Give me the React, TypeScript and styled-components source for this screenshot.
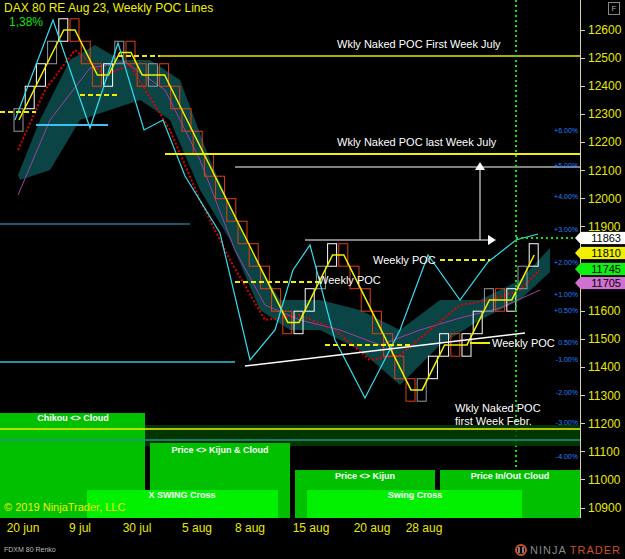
import React from 'react';
import styled, { createGlobalStyle } from 'styled-components';

const Global = createGlobalStyle`
  html, body { margin: 0; background: #000; }
  body { font-family: "Liberation Sans", Arial, sans-serif; }
`;

const Root = styled.div`
  width: 625px;
  height: 559px;
  display: grid;
  grid-template-rows: 518px 22px 19px;
  background: #000;
  overflow: hidden;
`;

const Top = styled.div`
  display: flex;
`;

const Plot = styled.div`
  position: relative;
  width: 580px;
  height: 518px;
`;

const Title = styled.div`
  position: absolute;
  left: 4px;
  top: 1px;
  color: #f0f000;
  font-size: 12px;
  line-height: 14px;
`;

const Pct = styled.div`
  color: #10e010;
  font-size: 12px;
  padding-left: 5px;
`;

const Axis = styled.div`
  position: relative;
  width: 44px;
  border-left: 1px solid #d8d0b0;
`;

const AxisLabel = styled.div`
  position: absolute;
  left: 0;
  display: flex;
  align-items: center;
  gap: 3px;
  transform: translateY(-50%);
  color: #e8e800;
  font-size: 12px;
  &::before {
    content: '';
    width: 4px;
    height: 1px;
    background: #d8d0b0;
  }
`;

const Tag = styled.div<{ $bg: string }>`
  position: absolute;
  left: -6px;
  width: 50px;
  height: 13px;
  transform: translateY(-50%);
  background: ${(p) => p.$bg};
  clip-path: polygon(0 50%, 6px 0, 100% 0, 100% 100%, 6px 100%);
  color: #000;
  font-size: 11px;
  line-height: 13px;
  text-align: right;
  padding-right: 4px;
  box-sizing: border-box;
`;

const Corner = styled.div`
  position: absolute;
  right: 5px;
  top: 2px;
  width: 10px;
  height: 11px;
  border: 1px solid #888;
  color: #aaa;
  font-size: 8px;
  text-align: center;
  line-height: 11px;
`;

const TimeAxis = styled.div`
  position: relative;
  color: #e8e800;
  font-size: 12px;
`;

const TimeLabel = styled.span`
  position: absolute;
  top: 3px;
  transform: translateX(-50%);
  white-space: nowrap;
`;

const Footer = styled.div`
  display: flex;
  justify-content: space-between;
  align-items: center;
  padding: 0 4px;
`;

const Instr = styled.span`
  color: #bbb;
  font-size: 7px;
`;

const Logo = styled.span`
  display: flex;
  align-items: center;
  gap: 3px;
  color: #888;
  font-size: 11px;
  letter-spacing: 1px;
  b { color: #d05020; font-weight: normal; }
`;

const Y = (p: number) => 30 + (12600 - p) * 0.2812;

const steps = [5, -3, 2, -2, 1, -12, 4, -7, 3, -1, 3, -1, 3];
type Brick = { x: number; lo: number; up: boolean };
const bricks: Brick[] = [];
let lvl = 12240;
let col = 0;
steps.forEach((s) => {
  for (let i = 0; i < Math.abs(s); i++) {
    const up = s > 0;
    const next = lvl + (up ? 80 : -80);
    bricks.push({ x: 14 + col * 11.2, lo: Math.min(lvl, next), up });
    lvl = next;
    col++;
  }
});
const mid = bricks.map((b) => `${b.x + 5},${Y(b.lo + 40)}`).join(' ');

const swing = '15,120 53,20 90,128 118,43 144,130 163,120 185,176 220,233 250,360 275,330 293,270 310,245 335,340 365,398 400,330 428,255 460,300 488,262 516,240 538,234';
const redMa = '18,150 45,90 75,50 105,75 130,65 170,130 200,200 230,260 265,320 300,315 335,330 370,360 400,355 430,330 460,305 490,300 520,290 540,270';
const purple = '18,195 50,120 90,68 125,62 165,90 200,160 235,250 265,305 300,320 340,330 380,345 420,330 460,318 500,308 540,290';
const cloud = '18,175 40,120 70,60 95,45 120,60 150,60 180,80 210,160 250,250 280,300 320,300 360,310 400,330 440,300 480,300 520,280 550,248 550,272 520,300 480,320 440,345 400,385 360,350 320,330 290,330 260,310 230,240 200,190 170,120 140,100 110,110 80,120 50,170 20,180';

const axisVals = [12600, 12500, 12400, 12300, 12200, 12100, 12000, 11900, 11800, 11700, 11600, 11500, 11400, 11300, 11200, 11100, 11000, 10900];
const pcts: [string, number][] = [['+6.00%', 133], ['+5.00%', 168], ['+4.00%', 199], ['+3.00%', 232], ['+2.00%', 265], ['+1.00%', 297], ['+0.50%', 313], ['0.50%', 345], ['-1.00%', 362], ['-2.00%', 395], ['-3.00%', 425], ['-4.00%', 459], ['-5.00%', 492]];
const times: [string, number][] = [['20 jun', 23], ['9 jul', 80], ['30 jul', 137], ['5 aug', 197], ['8 aug', 250], ['15 aug', 311], ['20 aug', 372], ['28 aug', 424]];

const Chart = () => (
  <svg width="580" height="518" style={{ position: 'absolute', inset: 0 }} fontFamily="Liberation Sans, Arial, sans-serif">
    <polygon points={cloud} fill="#0c5050" opacity="0.85" />
    <polyline points={purple} fill="none" stroke="#a040a0" strokeWidth="1" />
    <polyline points={redMa} fill="none" stroke="#e00000" strokeWidth="2" strokeDasharray="2 2" />
    {bricks.map((b, i) => (
      <rect key={i} x={b.x} y={Y(b.lo + 80)} width="9" height={80 * 0.2812} fill="none" stroke={b.up ? (i % 3 ? '#fff' : '#999') : '#e04010'} strokeWidth="1" />
    ))}
    <polyline points={mid} fill="none" stroke="#f0f000" strokeWidth="1.5" />
    <polyline points={swing} fill="none" stroke="#30e0f0" strokeWidth="1.2" />
    <line x1="160" y1="56" x2="580" y2="56" stroke="#e8e800" strokeWidth="1.5" />
    <line x1="118" y1="56" x2="160" y2="56" stroke="#e8e800" strokeWidth="2" strokeDasharray="5 3" />
    <line x1="165" y1="154" x2="580" y2="154" stroke="#f0f000" strokeWidth="2" />
    <line x1="235" y1="167" x2="580" y2="167" stroke="#fff" strokeWidth="1" />
    <line x1="0" y1="224" x2="190" y2="224" stroke="#30b0e0" strokeWidth="1" />
    <line x1="0" y1="362" x2="235" y2="362" stroke="#30c0e0" strokeWidth="1.5" />
    <line x1="0" y1="112" x2="36" y2="112" stroke="#f0f000" strokeWidth="2" strokeDasharray="5 3" />
    <line x1="36" y1="125" x2="108" y2="125" stroke="#40c0f0" strokeWidth="2" />
    <line x1="80" y1="95" x2="118" y2="95" stroke="#f0f000" strokeWidth="2" strokeDasharray="5 3" />
    <line x1="235" y1="282" x2="320" y2="282" stroke="#f0f000" strokeWidth="2" strokeDasharray="5 3" />
    <line x1="325" y1="345" x2="410" y2="345" stroke="#f0f000" strokeWidth="2" strokeDasharray="5 3" />
    <line x1="440" y1="260" x2="490" y2="260" stroke="#f0f000" strokeWidth="2" strokeDasharray="5 3" />
    <line x1="470" y1="343" x2="490" y2="343" stroke="#f0f000" strokeWidth="2" />
    <line x1="245" y1="366" x2="525" y2="333" stroke="#fff" strokeWidth="1.5" />
    <line x1="305" y1="240" x2="488" y2="240" stroke="#fff" strokeWidth="1" />
    <polygon points="488,235 496,240 488,245" fill="#fff" />
    <line x1="480" y1="240" x2="480" y2="170" stroke="#fff" strokeWidth="1" />
    <polygon points="475,170 480,162 485,170" fill="#fff" />
    <line x1="516" y1="0" x2="516" y2="518" stroke="#10e010" strokeWidth="2" strokeDasharray="2 3" />
    <line x1="516" y1="238" x2="580" y2="238" stroke="#10e010" strokeWidth="2" strokeDasharray="2 3" />
    <g fill="#fff" fontSize="11">
      <text x="337" y="48">Wkly Naked POC  First Week July</text>
      <text x="337" y="146">Wkly Naked POC  last Week July</text>
      <text x="373" y="264">Weekly POC</text>
      <text x="318" y="284">Weekly POC</text>
      <text x="492" y="347">Weekly POC</text>
      <text x="455" y="412">Wkly Naked POC</text>
      <text x="455" y="425">first Week Febr.</text>
    </g>
    <g fill="#2080ff" fontSize="7" textAnchor="end">
      {pcts.map(([t, y]) => <text key={t} x="578" y={y}>{t}</text>)}
    </g>
    <rect x="0" y="413" width="145" height="105" fill="#00c000" />
    <rect x="0" y="425" width="580" height="21" fill="#004000" opacity="0.85" />
    <rect x="0" y="413" width="145" height="33" fill="#00c000" />
    <line x1="0" y1="429" x2="580" y2="429" stroke="#f0f000" strokeWidth="1.5" />
    <line x1="0" y1="440" x2="580" y2="440" stroke="#209090" strokeWidth="1.5" />
    <rect x="150" y="443" width="140" height="75" fill="#00c000" />
    <rect x="295" y="470" width="140" height="48" fill="#00c000" />
    <rect x="440" y="470" width="140" height="48" fill="#00c000" />
    <rect x="87" y="490" width="191" height="28" fill="#00f000" />
    <rect x="307" y="490" width="215" height="28" fill="#00f000" />
    <g fill="#fff" fontSize="9" fontWeight="bold" textAnchor="middle">
      <text x="73" y="421">Chikou &lt;&gt; Cloud</text>
      <text x="220" y="453">Price &lt;&gt; Kijun &amp; Cloud</text>
      <text x="365" y="479">Price &lt;&gt; Kijun</text>
      <text x="510" y="479">Price In/Out Cloud</text>
      <text x="182" y="498">X SWING Cross</text>
      <text x="415" y="498">Swing Cross</text>
    </g>
    <text x="4" y="511" fill="#f0f000" fontSize="11">© 2019 NinjaTrader, LLC</text>
  </svg>
);

const tags: [number, string, string][] = [[11863, '#fff', '11863'], [11810, '#f0f000', '11810'], [11745, '#10f010', '11745'], [11705, '#d070d0', '11705']];
const tagY = [238, 253, 269, 283];

export default function App() {
  return (
    <Root>
      <Global />
      <Top>
        <Plot>
          <Chart />
          <Title>
            DAX 80 RE  Aug 23, Weekly POC Lines
            <Pct>1,38%</Pct>
          </Title>
        </Plot>
        <Axis>
          <Corner>F</Corner>
          {axisVals.map((v) => (
            <AxisLabel key={v} style={{ top: Y(v) }}>{v}</AxisLabel>
          ))}
          {tags.map(([v, bg, t], i) => (
            <Tag key={v} $bg={bg} style={{ top: tagY[i] }}>{t}</Tag>
          ))}
        </Axis>
      </Top>
      <TimeAxis>
        {times.map(([t, x]) => (
          <TimeLabel key={t} style={{ left: x }}>{t}</TimeLabel>
        ))}
      </TimeAxis>
      <Footer>
        <Instr>FDXM 80 Renko</Instr>
        <Logo>
          <svg width="12" height="12" viewBox="0 0 12 12">
            <circle cx="6" cy="6" r="5" fill="none" stroke="#d05020" strokeWidth="2" />
            <path d="M4 3v6M8 3v6" stroke="#aaa" strokeWidth="1.5" />
          </svg>
          NINJA<b>TRADER</b>
        </Logo>
      </Footer>
    </Root>
  );
}
